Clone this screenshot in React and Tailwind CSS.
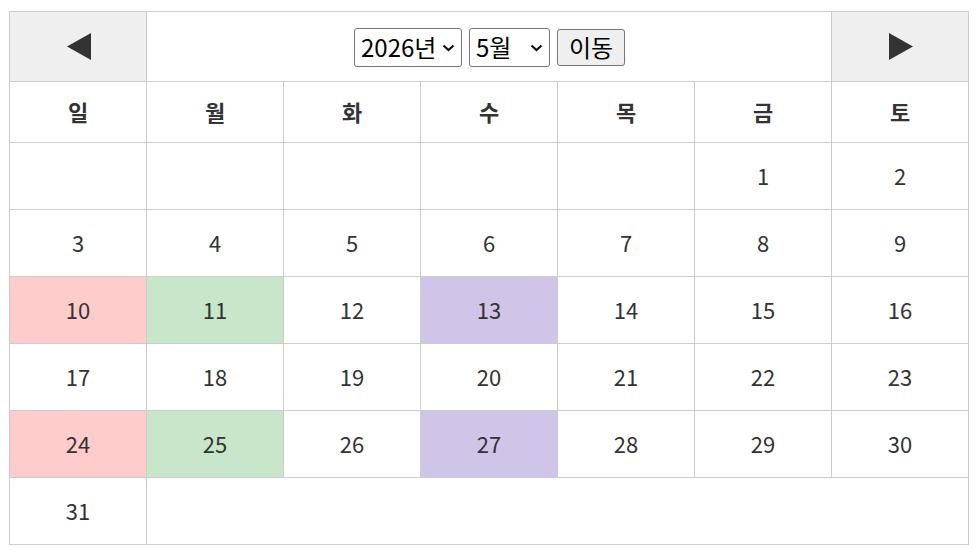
import React, { useState } from 'react';

const days = ['일', '월', '화', '수', '목', '금', '토'];

const highlight = {
  10: 'bg-[#ffcccc]',
  24: 'bg-[#ffcccc]',
  11: 'bg-[#c8e6c9]',
  25: 'bg-[#c8e6c9]',
  13: 'bg-[#d1c4e9]',
  27: 'bg-[#d1c4e9]',
};

const Cell = ({ children, className = '' }) => (
  <div className={`flex items-center justify-center border-r border-b border-[#cccccc] ${className}`}>
    {children}
  </div>
);

const Chevron = () => (
  <svg
    width="13"
    height="8"
    viewBox="0 0 13 8"
    className="pointer-events-none absolute right-[7px] top-[16px]"
  >
    <polyline points="1.5,1.5 6.5,6 11.5,1.5" fill="none" stroke="#111111" strokeWidth="2.2" />
  </svg>
);

const App = () => {
  const [year, setYear] = useState('2026');
  const [month, setMonth] = useState('5');

  // 2026년 5월: 1일은 금요일
  const cells = [];
  for (let i = 0; i < 5; i++) cells.push(null);
  for (let d = 1; d <= 31; d++) cells.push(d);

  return (
    <div
      className="pl-[9px] pt-[11px] text-[#333333]"
      style={{ fontFamily: '"Noto Sans CJK KR", "Noto Sans", sans-serif' }}
    >
      <div className="grid w-[960px] grid-cols-[repeat(7,137px)] border-l border-t border-[#cccccc] text-[22px]">
        <Cell className="h-[70px] bg-[#efefef] pb-[2px]">
          <svg width="26" height="28" viewBox="0 0 26 28" className="ml-[2px] mt-[2px]">
            <polygon points="25,0 25,27 1,13.5" fill="#333333" />
          </svg>
        </Cell>
        <Cell className="col-span-5 h-[70px] gap-[7px] pl-[1px] pt-[1px] text-[24px]">
          <div className="relative">
            <select
              value={year}
              onChange={(e) => setYear(e.target.value)}
              className="block h-[39px] w-[108px] appearance-none rounded-[3px] border border-[#767676] bg-white pl-[6px] leading-none text-black"
            >
              {['2024', '2025', '2026', '2027', '2028'].map((y) => (
                <option key={y} value={y}>{y}년</option>
              ))}
            </select>
            <Chevron />
          </div>
          <div className="relative">
            <select
              value={month}
              onChange={(e) => setMonth(e.target.value)}
              className="block h-[39px] w-[81px] appearance-none rounded-[3px] border border-[#767676] bg-white pl-[6px] leading-none text-black"
            >
              {Array.from({ length: 12 }, (_, i) => String(i + 1)).map((m) => (
                <option key={m} value={m}>{m}월</option>
              ))}
            </select>
            <Chevron />
          </div>
          <button className="h-[37px] w-[68px] rounded-[3px] border border-[#767676] bg-[#efefef] leading-none text-black">
            이동
          </button>
        </Cell>
        <Cell className="h-[70px] bg-[#efefef] pb-[2px]">
          <svg width="26" height="28" viewBox="0 0 26 28" className="ml-[2px] mt-[2px]">
            <polygon points="1,0 1,27 25,13.5" fill="#333333" />
          </svg>
        </Cell>

        {days.map((d) => (
          <Cell key={d} className="h-[61px] pb-[2px] font-bold">
            {d}
          </Cell>
        ))}

        {cells.map((d, i) => (
          <Cell key={i} className={`h-[67px] pb-[2px] ${d ? highlight[d] || '' : ''}`}>
            {d}
          </Cell>
        ))}
        <Cell className="col-span-6 h-[67px]" />
      </div>
    </div>
  );
};

export default App;
